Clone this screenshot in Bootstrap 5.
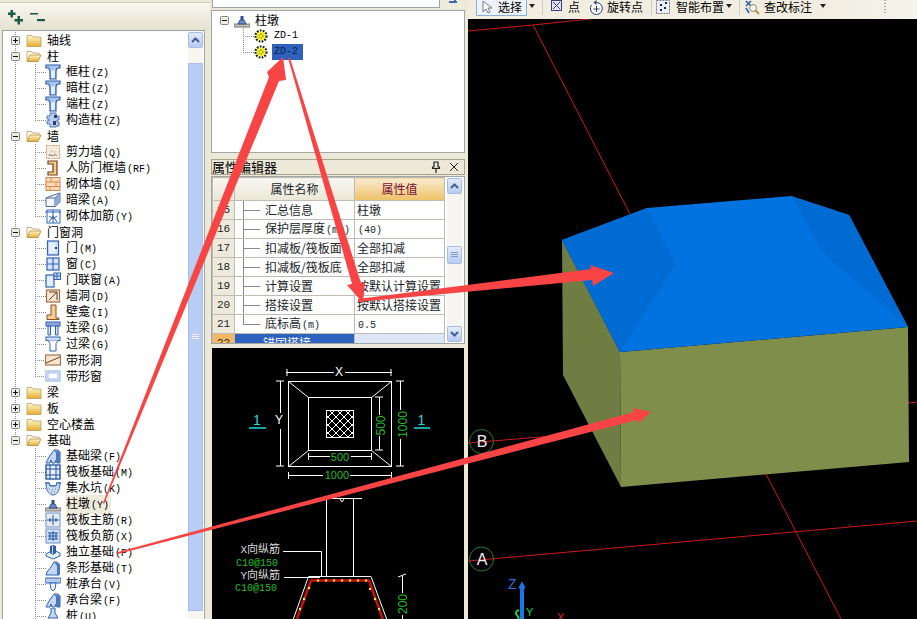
<!DOCTYPE html>
<html lang="zh"><head><meta charset="utf-8"><title>柱墩</title>
<link rel="stylesheet" href="https://cdn.jsdelivr.net/npm/bootstrap@5.3.0/dist/css/bootstrap.min.css">
<style>
body{margin:0;background:#ECE9D8;color:#000}
.appwin{width:917px;height:619px;font:12px/16px "Noto Sans CJK SC","Liberation Sans",sans-serif;background:#ECE9D8}
.svgdefs{position:absolute;width:0;height:0}
.km{font:10px/16px "Liberation Mono",monospace;margin-left:1px}
/* left */
.leftcol{width:210px;flex:none}
.topstrip{height:28px;border-top:1px solid #CFCBB5;margin-top:2px;background:linear-gradient(#F8F6EE,#E6E2D0);padding:4px 0 0 7px;flex:none}
.treebox{margin-left:2px;width:203px;height:591px;background:#fff;border:1px solid #9FA6A8;border-bottom:0;padding-top:1px;flex:none}
.treelist{flex:1 1 auto;min-width:0}
.tr{height:16px;white-space:nowrap}
.c1{flex:none;width:24px;height:16px;background:repeating-linear-gradient(#8a8a8a 0 1px,#fff 1px 2px) 12px 0/1px 100% no-repeat}
.c1.half{background-size:1px 50%}
.c1.blank{background:none}
.c2{flex:none;width:19px;height:16px;background:repeating-linear-gradient(#8a8a8a 0 1px,#fff 1px 2px) 8px 0/1px 100% no-repeat,repeating-linear-gradient(90deg,#8a8a8a 0 1px,#fff 1px 2px) 8px 8px/11px 1px no-repeat}
.c2.last{background:repeating-linear-gradient(#8a8a8a 0 1px,#fff 1px 2px) 8px 0/1px 50% no-repeat,repeating-linear-gradient(90deg,#8a8a8a 0 1px,#fff 1px 2px) 8px 8px/11px 1px no-repeat}
.exp{width:9px;height:9px;margin-left:8px;flex:none}
.ico{width:16px;height:16px;flex:none;margin-left:-1px}
.tx{margin-left:5px}
.hit{background:#EDEBDC;padding-right:2px;margin-right:-2px}
.sb{flex:none;width:15px;margin:0 1px 0 0;background:#F6F5EF}
.sbbtn{height:16px;background:linear-gradient(#E4ECFC,#B8CBF2);border:1px solid #A8BCE6;border-radius:2px;flex:none}
.sbthumb{height:548px;margin-top:15px;background:#B9CCF4;border:1px solid #A6BCEC;border-radius:1px}
/* middle */
.midcol{width:258px;flex:none}
.searchrow{height:8px;margin-left:2px;width:253px;flex:none}
.searchinp{width:228px;background:#fff;border:1px solid #9FA6A8;border-top:0}
.searchbtn{width:25px;background:#EFEBDC}
.midtree{height:143px;width:254px;margin:2px 0 0 1px;background:#fff;border:1px solid #9FA6A8;padding-top:1px;flex:none}
.gutter{width:23px}
.idl{margin-left:5px}
.sel{background:#2E62BE;color:#10213F;padding:0 2px;margin-left:3px;width:31px}
.panelhead{height:16px;width:254px;margin:6px 0 0 1px;background:#ECE9D8;border:1px solid #A6A48F;font-size:13px;line-height:13px;flex:none;padding:0 5px 1px 0}
.gridbox{height:168px;width:254px;margin:1px 0 0 1px;background:#fff;border:1px solid #9FA6A8;flex:none}
.pgrid{--bs-table-bg:transparent;width:232px;table-layout:fixed;border-color:#BDBDB5;flex:none;font-size:12px;line-height:14px}
.gc1{width:22px}.gc2{width:120px}.gc3{width:90px}
.pgrid tr{height:19px}
.pgrid td,.pgrid th{padding:0;height:19px;font-weight:400;overflow:hidden;white-space:nowrap;vertical-align:middle;line-height:14px}
.pgrid .km{line-height:14px}
.pgrid thead tr{height:23px}
.pgrid th.hd{height:23px;text-align:center;background:linear-gradient(#F8F7F0,#EAE7D6)}
.pgrid th.hv{height:23px;text-align:center;color:#7A0C3C;background:linear-gradient(#F9EBD0,#EFC266)}
.pgrid td.rn{text-align:center;background:#EDEADB;font:11px/14px "Liberation Mono",monospace}
.pgrid td.nm{padding-left:30px;background:linear-gradient(#8a8a8a,#8a8a8a) 8px 0/1px 100% no-repeat,linear-gradient(#8a8a8a,#8a8a8a) 8px 50%/17px 1px no-repeat}
.pgrid td.nm.end{background:linear-gradient(#8a8a8a,#8a8a8a) 8px 0/1px 50% no-repeat,linear-gradient(#8a8a8a,#8a8a8a) 8px 50%/17px 1px no-repeat}
.pgrid td.vl{padding-left:2px}
.pgrid td.rg{background:#F4B860;font:11px/14px "Liberation Mono",monospace;text-align:center}
.pgrid td.gb{background:#2E62BE;color:#fff;padding-left:28px}
.pgrid td.gv{background:#DCE6F6}
.pscroll{flex:none;width:15px;margin-left:2px;height:164px;margin-top:1px;background:#F6F5EF}
.pthumb{height:18px;margin-top:52px;margin-bottom:62px;background:linear-gradient(#E4ECFC,#B8CBF2);border:1px solid #A8BCE6;border-radius:2px;flex:none}
.cadbox{height:272px;width:252px;margin:4px 0 0 2px;background:#000;flex:none;display:block}
/* right */
.rightcol{flex:1 1 auto;min-width:0}
.toolbar{height:19px;flex:none;background:linear-gradient(90deg,#F1EEE1,#F1EEE1 80%,#F5F3EA);white-space:nowrap;padding-left:8px;line-height:13px;font-size:12px}
.tbtn{height:17px;margin-top:-1px}
.tbtn.on{width:51px;background:#EEF3FB;border:1px solid #8FAFD8;padding-left:4px}
.caret-d{width:0;height:0;border:3px solid transparent;border-top:4px solid #222;border-bottom:0;flex:none;margin-top:4px}
.tsep{width:1px;height:15px;background:#CFCDBE;flex:none}
.ml2x{margin-left:2px}.ml3x{margin-left:3px}.ml4x{margin-left:4px}.ml5x{margin-left:5px}.ml6x{margin-left:6px}.ml7x{margin-left:7px}.ml8x{margin-left:8px}.ml9x{margin-left:9px}
.grip{width:2px;height:14px;background:repeating-linear-gradient(#AAA 0 1px,transparent 1px 3px);margin-left:auto;margin-right:31px;flex:none}
.viewport{width:449px;height:600px;display:block;flex:none}
.overlay{position:absolute;left:0;top:0;width:917px;height:619px;pointer-events:none}
.cad text{font-family:"Liberation Sans",sans-serif;font-size:12px}
.cad text.sm{font-size:11px}
.cad text.rb{font-family:"Liberation Mono",monospace;font-size:10px}
.cad text.one{font-size:14px}
.cad .cj{font-family:"Noto Sans CJK SC",sans-serif;font-size:11px}
.cad .mo{font-family:"Liberation Mono",monospace}
</style></head>
<body class="overflow-hidden">
<svg class="svgdefs" aria-hidden="true"><defs>
<linearGradient id="gold" x1="0" y1="0" x2="0" y2="1"><stop offset="0" stop-color="#FFF8D0"/><stop offset="1" stop-color="#E6AE2E"/></linearGradient>
<pattern id="hatch" width="8" height="8" patternUnits="userSpaceOnUse"><path d="M0 0L8 8M8 0L0 8" stroke="#fff" stroke-width="1" fill="none"/></pattern>
<symbol id="xp" viewBox="0 0 9 9"><rect x=".5" y=".5" width="8" height="8" rx="1" fill="#EDEDE6" stroke="#7F8A86"/><path d="M2 4.500h5M4.500 2v5" stroke="#111"/></symbol>
<symbol id="xm" viewBox="0 0 9 9"><rect x=".5" y=".5" width="8" height="8" rx="1" fill="#EDEDE6" stroke="#7F8A86"/><path d="M2 4.500h5" stroke="#111"/></symbol>
<symbol id="f1" viewBox="0 0 16 16"><path d="M1 5V3.500h5l1 1.500h8v9.500H1z" fill="url(#gold)" stroke="#B9A060" stroke-width=".8"/></symbol>
<symbol id="f2" viewBox="0 0 16 16"><path d="M1 13V3.500h5l1 1.500h6v2" fill="#FFF8E6" stroke="#B9A060" stroke-width=".8"/><path d="M1 13.500L4 7h11l-3 6.500z" fill="url(#gold)" stroke="#B08C3C" stroke-width=".8"/></symbol>
<symbol id="col" viewBox="0 0 16 16"><path d="M1 1h14v3h-2.500L11 6.500V15H5V6.500L3.500 4H1z" fill="#A9C2EE" stroke="#2A5CB0" stroke-width="1.200"/><path d="M6.200 6h3.600v8H6.200z" fill="#EAF1FC"/></symbol>
<symbol id="gz" viewBox="0 0 16 16"><path d="M5 1h6v3h3v4h-2v2h2v4h-3v1H5v-3H2V9h2V7H2V4h3z" fill="#B8CCEE" stroke="#4D76B8"/><path d="M9 3h3v3H9zM8 9h3v4H8z" fill="#25406E"/></symbol>
<symbol id="sw" viewBox="0 0 16 16"><rect x="1.500" y="1.500" width="13" height="13" fill="#F6EADC" stroke="#D49A68" stroke-dasharray="2 1"/><path d="M4 12l1-2 1 2 1-1 2 1 1-2 2 2M6 7h1M9 8h1" stroke="#8B8B80" fill="none"/></symbol>
<symbol id="rf" viewBox="0 0 16 16"><path d="M3 1h9v14H3v-3h5V4H3z" fill="#F3CD94" stroke="#7A3D10" stroke-width="1.200"/></symbol>
<symbol id="br" viewBox="0 0 16 16"><rect x="1" y="1.500" width="14" height="13" fill="#FAD9B8" stroke="#D08A50"/><path d="M1 6h14M1 10.500h14M6 1.500V6M11 6v4.500M5 10.500v4" stroke="#D08A50" fill="none"/></symbol>
<symbol id="al" viewBox="0 0 16 16"><path d="M1 6l5-2 9-3v9l-5 4.500H1z" fill="#F4F7FC" stroke="#4A6A9C"/><path d="M1 6h9v8.500M10 6l5-5" stroke="#4A6A9C" fill="none"/><path d="M10 6l5-5v9l-5 4.500z" fill="#8EA8D2"/></symbol>
<symbol id="jj" viewBox="0 0 16 16"><rect x="2" y="2" width="13" height="13" fill="#fff" stroke="#2A63C0"/><path d="M0 4h16M8 2v13M4 8l4 3 4-3M4 14l4-6 4 6" stroke="#2A63C0" fill="none"/></symbol>
<symbol id="dr" viewBox="0 0 16 16"><rect x="2.500" y="1" width="11" height="14" fill="#CFE0F8" stroke="#2F63B4" stroke-width="1.200"/><path d="M4.500 3h6v10h-6z" fill="#E8F0FC"/><rect x="10" y="7" width="2" height="2" fill="#1E3F80"/></symbol>
<symbol id="wn" viewBox="0 0 16 16"><rect x="2" y="2" width="12" height="12" fill="#D6E4FA" stroke="#2F63B4" stroke-width="1.200"/><path d="M8 2v12M2 8h12" stroke="#2F63B4" stroke-width="1.200"/></symbol>
<symbol id="mlc" viewBox="0 0 16 16"><rect x="1" y="3" width="8" height="12" fill="#E4EEFC" stroke="#2F63B4" stroke-width="1.200"/><rect x="9" y="1" width="6.500" height="6.500" fill="#CFE0F8" stroke="#2F63B4"/><path d="M12 1v6.500M9 4h6.500" stroke="#2F63B4"/></symbol>
<symbol id="wd" viewBox="0 0 16 16"><rect x="1.500" y="2" width="13" height="12" fill="#F7E6D4" stroke="#A86A3A" stroke-width="1.200"/><path d="M4 12L12 4M4 4h8v8" stroke="#5A3A20" fill="none"/></symbol>
<symbol id="bk" viewBox="0 0 16 16"><path d="M6 1h5v13h3v1.500H2V11h4z" fill="#F3CD94" stroke="#8A5020"/></symbol>
<symbol id="lk" viewBox="0 0 16 16"><rect x="1" y="2" width="14" height="4" fill="#8EA8D8" stroke="#2F63B4"/><path d="M3 6h2.500v9H3zM10.500 6H13v9h-2.500z" fill="#D6E4FA" stroke="#2F63B4"/></symbol>
<symbol id="gl" viewBox="0 0 16 16"><rect x="1" y="1" width="14" height="3.500" fill="#CFE0F8" stroke="#2F63B4"/><path d="M3 4.500l2 3V15h6V7.500l2-3" fill="#fff" stroke="#2F63B4"/></symbol>
<symbol id="dd" viewBox="0 0 16 16"><rect x=".5" y="3" width="15" height="10" fill="#F7E6D4" stroke="#A8734A" stroke-width="1.200"/><path d="M1 11L15 5" stroke="#6A3F20"/></symbol>
<symbol id="dc" viewBox="0 0 16 16"><rect x="1" y="3" width="14" height="10" fill="#E8F0FC" stroke="#A8C0E8" stroke-width="1.400"/><rect x="3" y="5" width="10" height="6" fill="#fff" stroke="#6C90D0" stroke-width=".6"/></symbol>
<symbol id="jl" viewBox="0 0 16 16"><path d="M1 15l3-6 5-7h4l2 2v11h-3l-1-3-1 3H7l-1-3-1 3z" fill="#C4D6F4" stroke="#2F63B4"/><path d="M9 2l2 3v10h4V4z" fill="#4E78BC"/></symbol>
<symbol id="fb" viewBox="0 0 16 16"><rect x="1" y="1" width="14" height="14" fill="#E4EEFC" stroke="#1F4F9C" stroke-width="1.300"/><path d="M1 5h14M1 11h14M5 1v14M11 1v14" stroke="#1F4F9C"/></symbol>
<symbol id="js" viewBox="0 0 16 16"><path d="M0 3h4l1 3h6l1-3h4" fill="none" stroke="#3A69B6" stroke-width="1.300"/><path d="M1 3c0 9 4 12 7 12s7-3 7-12l-3 0-1 3H5L4 3z" fill="#C8D8F2" stroke="#3A69B6"/><path d="M4 9h1M7 10h1M10 9h1M6 12h1M9 12h1" stroke="#7F7F7F"/></symbol>
<symbol id="zd" viewBox="0 0 16 16"><path d="M0 12h16v3H0z" fill="#C8C4B4" stroke="#777"/><path d="M4 12l2-4h4l2 4z" fill="#6C8CC4" stroke="#2F4F8C"/><rect x="6.500" y="4" width="3" height="4" fill="#2F4F8C"/></symbol>
<symbol id="zj" viewBox="0 0 16 16"><rect x="1" y="1" width="14" height="14" fill="#E4EEFC" stroke="#6C8CC4"/><path d="M2 8h12M8 3v10M5 6v4M11 6v4" stroke="#1F4F9C" fill="none"/></symbol>
<symbol id="fj" viewBox="0 0 16 16"><rect x="1" y="1" width="14" height="14" fill="#CFE0F8" stroke="#6C8CC4"/><path d="M3 5h10M3 11h10M8 3v10M3 8h10M5 5v6M11 5v6" stroke="#1F4F9C" fill="none"/></symbol>
<symbol id="dl" viewBox="0 0 16 16"><path d="M1 10l7-4 7 3v3l-7 3-7-3z" fill="#E4EEFC" stroke="#2F63B4"/><path d="M5 2l3-1 3 1v7l-3 2-3-2z" fill="#2F5CA8"/><path d="M7 2h1v8H7z" fill="#C8D8F2"/></symbol>
<symbol id="tj" viewBox="0 0 16 16"><path d="M1 15l1-3 4-5 3-5h3l2 2v11z" fill="#C4D6F4" stroke="#2F63B4"/><path d="M9 2l3 4v9h3V4z" fill="#4E78BC"/></symbol>
<symbol id="ca" viewBox="0 0 16 16"><rect x="0" y="2" width="16" height="5" rx="1" fill="#B8CCEE" stroke="#2F63B4"/><path d="M5 7h6l-1 6-2 2-2-2z" fill="#F0F4FC" stroke="#2F63B4"/></symbol>
<symbol id="zh" viewBox="0 0 16 16"><path d="M6 0h4v5l3 5H3l3-5z" fill="#C4D6F4" stroke="#2F63B4"/></symbol>
<symbol id="gr" viewBox="0 0 16 16"><circle cx="8" cy="8" r="5.500" fill="none" stroke="#2A2A00" stroke-width="2.200" stroke-dasharray="1.800 1.200"/><circle cx="8" cy="8" r="4.200" fill="#F6EE18"/><circle cx="8" cy="8" r="2" fill="none" stroke="#444" stroke-width=".8" stroke-dasharray="1 1"/></symbol>
</defs></svg>

<div class="appwin d-flex position-relative overflow-hidden">
 <div class="leftcol d-flex flex-column">
  <div class="topstrip d-flex align-items-start">
   <svg width="20" height="20" viewBox="0 0 20 20"><path d="M3.500 3H6v2.500h2.500V8H6v2.500H3.500V8H1V5.500h2.500zM10.500 9H13v3h3v2.500h-3v3h-2.500v-3h-3V12h3z" fill="#1A5A4A"/></svg>
   <svg width="22" height="20" viewBox="0 0 22 20"><path d="M3 6h8v1.500H3z" fill="#1A4F45"/><path d="M10 12h8v2.200h-8z" fill="#1A5A4A"/></svg>
  </div>
  <div class="treebox d-flex">
   <div class="treelist">
    <div class="tr d-flex align-items-center"><div class="c1 d-flex align-items-center"><svg class="exp"><use href="#xp"/></svg></div><svg class="ico"><use href="#f1"/></svg><span class="tx">轴线</span></div>
    <div class="tr d-flex align-items-center"><div class="c1 d-flex align-items-center"><svg class="exp"><use href="#xm"/></svg></div><svg class="ico"><use href="#f2"/></svg><span class="tx">柱</span></div>
    <div class="tr d-flex align-items-center"><div class="c1"></div><div class="c2"></div><svg class="ico"><use href="#col"/></svg><span class="tx">框柱<span class="km">(Z)</span></span></div>
    <div class="tr d-flex align-items-center"><div class="c1"></div><div class="c2"></div><svg class="ico"><use href="#col"/></svg><span class="tx">暗柱<span class="km">(Z)</span></span></div>
    <div class="tr d-flex align-items-center"><div class="c1"></div><div class="c2"></div><svg class="ico"><use href="#col"/></svg><span class="tx">端柱<span class="km">(Z)</span></span></div>
    <div class="tr d-flex align-items-center"><div class="c1"></div><div class="c2 last"></div><svg class="ico"><use href="#gz"/></svg><span class="tx">构造柱<span class="km">(Z)</span></span></div>
    <div class="tr d-flex align-items-center"><div class="c1 d-flex align-items-center"><svg class="exp"><use href="#xm"/></svg></div><svg class="ico"><use href="#f2"/></svg><span class="tx">墙</span></div>
    <div class="tr d-flex align-items-center"><div class="c1"></div><div class="c2"></div><svg class="ico"><use href="#sw"/></svg><span class="tx">剪力墙<span class="km">(Q)</span></span></div>
    <div class="tr d-flex align-items-center"><div class="c1"></div><div class="c2"></div><svg class="ico"><use href="#rf"/></svg><span class="tx">人防门框墙<span class="km">(RF)</span></span></div>
    <div class="tr d-flex align-items-center"><div class="c1"></div><div class="c2"></div><svg class="ico"><use href="#br"/></svg><span class="tx">砌体墙<span class="km">(Q)</span></span></div>
    <div class="tr d-flex align-items-center"><div class="c1"></div><div class="c2"></div><svg class="ico"><use href="#al"/></svg><span class="tx">暗梁<span class="km">(A)</span></span></div>
    <div class="tr d-flex align-items-center"><div class="c1"></div><div class="c2 last"></div><svg class="ico"><use href="#jj"/></svg><span class="tx">砌体加筋<span class="km">(Y)</span></span></div>
    <div class="tr d-flex align-items-center"><div class="c1 d-flex align-items-center"><svg class="exp"><use href="#xm"/></svg></div><svg class="ico"><use href="#f2"/></svg><span class="tx">门窗洞</span></div>
    <div class="tr d-flex align-items-center"><div class="c1"></div><div class="c2"></div><svg class="ico"><use href="#dr"/></svg><span class="tx">门<span class="km">(M)</span></span></div>
    <div class="tr d-flex align-items-center"><div class="c1"></div><div class="c2"></div><svg class="ico"><use href="#wn"/></svg><span class="tx">窗<span class="km">(C)</span></span></div>
    <div class="tr d-flex align-items-center"><div class="c1"></div><div class="c2"></div><svg class="ico"><use href="#mlc"/></svg><span class="tx">门联窗<span class="km">(A)</span></span></div>
    <div class="tr d-flex align-items-center"><div class="c1"></div><div class="c2"></div><svg class="ico"><use href="#wd"/></svg><span class="tx">墙洞<span class="km">(D)</span></span></div>
    <div class="tr d-flex align-items-center"><div class="c1"></div><div class="c2"></div><svg class="ico"><use href="#bk"/></svg><span class="tx">壁龛<span class="km">(I)</span></span></div>
    <div class="tr d-flex align-items-center"><div class="c1"></div><div class="c2"></div><svg class="ico"><use href="#lk"/></svg><span class="tx">连梁<span class="km">(G)</span></span></div>
    <div class="tr d-flex align-items-center"><div class="c1"></div><div class="c2"></div><svg class="ico"><use href="#gl"/></svg><span class="tx">过梁<span class="km">(G)</span></span></div>
    <div class="tr d-flex align-items-center"><div class="c1"></div><div class="c2"></div><svg class="ico"><use href="#dd"/></svg><span class="tx">带形洞</span></div>
    <div class="tr d-flex align-items-center"><div class="c1"></div><div class="c2 last"></div><svg class="ico"><use href="#dc"/></svg><span class="tx">带形窗</span></div>
    <div class="tr d-flex align-items-center"><div class="c1 d-flex align-items-center"><svg class="exp"><use href="#xp"/></svg></div><svg class="ico"><use href="#f1"/></svg><span class="tx">梁</span></div>
    <div class="tr d-flex align-items-center"><div class="c1 d-flex align-items-center"><svg class="exp"><use href="#xp"/></svg></div><svg class="ico"><use href="#f1"/></svg><span class="tx">板</span></div>
    <div class="tr d-flex align-items-center"><div class="c1 d-flex align-items-center"><svg class="exp"><use href="#xp"/></svg></div><svg class="ico"><use href="#f1"/></svg><span class="tx">空心楼盖</span></div>
    <div class="tr d-flex align-items-center"><div class="c1 half d-flex align-items-center"><svg class="exp"><use href="#xm"/></svg></div><svg class="ico"><use href="#f2"/></svg><span class="tx">基础</span></div>
    <div class="tr d-flex align-items-center"><div class="c1 blank"></div><div class="c2"></div><svg class="ico"><use href="#jl"/></svg><span class="tx">基础梁<span class="km">(F)</span></span></div>
    <div class="tr d-flex align-items-center"><div class="c1 blank"></div><div class="c2"></div><svg class="ico"><use href="#fb"/></svg><span class="tx">筏板基础<span class="km">(M)</span></span></div>
    <div class="tr d-flex align-items-center"><div class="c1 blank"></div><div class="c2"></div><svg class="ico"><use href="#js"/></svg><span class="tx">集水坑<span class="km">(K)</span></span></div>
    <div class="tr d-flex align-items-center"><div class="c1 blank"></div><div class="c2"></div><svg class="ico"><use href="#zd"/></svg><span class="tx hit">柱墩<span class="km">(Y)</span></span></div>
    <div class="tr d-flex align-items-center"><div class="c1 blank"></div><div class="c2"></div><svg class="ico"><use href="#zj"/></svg><span class="tx">筏板主筋<span class="km">(R)</span></span></div>
    <div class="tr d-flex align-items-center"><div class="c1 blank"></div><div class="c2"></div><svg class="ico"><use href="#fj"/></svg><span class="tx">筏板负筋<span class="km">(X)</span></span></div>
    <div class="tr d-flex align-items-center"><div class="c1 blank"></div><div class="c2"></div><svg class="ico"><use href="#dl"/></svg><span class="tx">独立基础<span class="km">(P)</span></span></div>
    <div class="tr d-flex align-items-center"><div class="c1 blank"></div><div class="c2"></div><svg class="ico"><use href="#tj"/></svg><span class="tx">条形基础<span class="km">(T)</span></span></div>
    <div class="tr d-flex align-items-center"><div class="c1 blank"></div><div class="c2"></div><svg class="ico"><use href="#ca"/></svg><span class="tx">桩承台<span class="km">(V)</span></span></div>
    <div class="tr d-flex align-items-center"><div class="c1 blank"></div><div class="c2"></div><svg class="ico"><use href="#jl"/></svg><span class="tx">承台梁<span class="km">(F)</span></span></div>
    <div class="tr d-flex align-items-center"><div class="c1 blank"></div><div class="c2"></div><svg class="ico"><use href="#zh"/></svg><span class="tx">桩<span class="km">(U)</span></span></div>
   </div>
   <div class="sb d-flex flex-column">
    <div class="sbbtn d-flex align-items-center justify-content-center"><svg width="9" height="6" viewBox="0 0 9 6"><path d="M1 5l3.500-3.500L8 5" fill="none" stroke="#41618F" stroke-width="2"/></svg></div>
    <div class="sbthumb d-flex align-items-center justify-content-center"><svg width="7" height="6" viewBox="0 0 7 6"><path d="M0 .5h7M0 2.500h7M0 4.500h7" stroke="#EDF2FD"/></svg></div>
   </div>
  </div>
 </div>

 <div class="midcol d-flex flex-column">
  <div class="searchrow d-flex"><div class="searchinp"></div><div class="searchbtn d-flex justify-content-center"><svg width="14" height="8" viewBox="0 0 14 8"><path d="M3 2h8M9 0v3" stroke="#3B6BB5" stroke-width="2" fill="none"/></svg></div></div>
  <div class="midtree">
   <div class="tr d-flex align-items-center"><div class="c1 blank gutter d-flex align-items-center"><svg class="exp"><use href="#xm"/></svg></div><svg class="ico"><use href="#zd"/></svg><span class="tx">柱墩</span></div>
   <div class="tr d-flex align-items-center"><div class="c1 blank gutter"></div><div class="c2"></div><svg class="ico"><use href="#gr"/></svg><span class="km idl">ZD-1</span></div>
   <div class="tr d-flex align-items-center"><div class="c1 blank gutter"></div><div class="c2 last"></div><svg class="ico"><use href="#gr"/></svg><span class="km sel">ZD-2</span></div>
  </div>
  <div class="panelhead d-flex align-items-center"><span>属性编辑器</span>
   <svg class="ms-auto" width="10" height="12" viewBox="0 0 10 12"><path d="M3 1h4v5h1.500v1.500h-7V6H3zM5 7.500V12" fill="none" stroke="#222" stroke-width="1.200"/></svg>
   <svg class="ms-2" width="10" height="10" viewBox="0 0 10 10"><path d="M1 1l8 8M9 1l-8 8" stroke="#222"/></svg>
  </div>
  <div class="gridbox d-flex overflow-hidden">
   <table class="table table-bordered pgrid mb-0">
    <colgroup><col class="gc1"><col class="gc2"><col class="gc3"></colgroup>
    <thead><tr><th class="hd"></th><th class="hd">属性名称</th><th class="hv">属性值</th></tr></thead>
    <tbody>
     <tr><td class="rn">15</td><td class="nm">汇总信息</td><td class="vl">柱墩</td></tr>
     <tr><td class="rn">16</td><td class="nm">保护层厚度<span class="km">(mm)</span></td><td class="vl"><span class="km">(40)</span></td></tr>
     <tr><td class="rn">17</td><td class="nm">扣减板/筏板面</td><td class="vl">全部扣减</td></tr>
     <tr><td class="rn">18</td><td class="nm">扣减板/筏板底</td><td class="vl">全部扣减</td></tr>
     <tr><td class="rn">19</td><td class="nm">计算设置</td><td class="vl">按默认计算设置</td></tr>
     <tr><td class="rn">20</td><td class="nm">搭接设置</td><td class="vl">按默认搭接设置</td></tr>
     <tr><td class="rn">21</td><td class="nm end">底标高<span class="km">(m)</span></td><td class="vl"><span class="km">0.5</span></td></tr>
     <tr><td class="rg">22</td><td class="gb">锚固搭接</td><td class="gv"></td></tr>
    </tbody>
   </table>
   <div class="pscroll d-flex flex-column">
    <div class="sbbtn d-flex align-items-center justify-content-center"><svg width="9" height="6" viewBox="0 0 9 6"><path d="M1 5l3.500-3.500L8 5" fill="none" stroke="#41618F" stroke-width="2"/></svg></div>
    <div class="pthumb d-flex align-items-center justify-content-center"><svg width="7" height="6" viewBox="0 0 7 6"><path d="M0 .5h7M0 2.500h7M0 4.500h7" stroke="#7F9CCF"/></svg></div>
    <div class="sbbtn d-flex align-items-center justify-content-center"><svg width="9" height="6" viewBox="0 0 9 6"><path d="M1 1l3.500 3.500L8 1" fill="none" stroke="#41618F" stroke-width="2"/></svg></div>
   </div>
  </div>
  <svg class="cadbox cad" viewBox="212 347 252 272">
   <g stroke="#fff" fill="none">
    <rect x="288.500" y="380.500" width="103" height="85"/><rect x="308.500" y="396.500" width="63" height="53"/>
    <path d="M288.500 380.500L308.500 396.500M391.500 380.500L371.500 396.500M288.500 465.500L308.500 449.500M391.500 465.500L371.500 449.500"/>
    <rect x="326.500" y="409.500" width="27" height="27" fill="url(#hatch)"/>
    <path d="M286 371.500H334M345 371.500H392M287 368v7M391 368v7"/>
    <path d="M280.500 380V412M280.500 428V465M276 380h8M276 465h8"/>
    <path d="M400.500 380V409M400.500 438V465M396 380h8M396 465h8"/>
    <path d="M379.500 396V414M379.500 435V449M375 396h8M375 449h8"/>
    <path d="M308 455.500H330M351 455.500H372M308.500 452v7M371.500 452v7"/>
    <path d="M288 474.500H323M350 474.500H392M288.500 471v7M391.500 471v7"/>
    <path d="M316 497.500H362M326.500 497.500V575.500M353.500 497.500V575.500M340 498l2 3 2-3"/>
    <path d="M283 550.500H321.500V575.500M284 576.500H320"/>
    <path d="M308.500 575.500H371L387 619M308.500 575.500L293 619"/>
    <path d="M402.500 575V592M402.500 614V619M398 576l8-3"/>
   </g>
   <path d="M296.500 619L311 579.500H369L383 619" fill="none" stroke="#D01010" stroke-width="2.500"/>
   <g fill="#FFE840"><circle cx="318" cy="579.500" r="1.200"/><circle cx="326" cy="579.500" r="1.200"/><circle cx="334" cy="579.500" r="1.200"/><circle cx="342" cy="579.500" r="1.200"/><circle cx="350" cy="579.500" r="1.200"/><circle cx="358" cy="579.500" r="1.200"/><circle cx="366" cy="579.500" r="1.200"/><circle cx="309" cy="587" r="1.200"/><circle cx="304" cy="598" r="1.200"/><circle cx="300" cy="608" r="1.200"/><circle cx="370" cy="588" r="1.200"/><circle cx="375" cy="598" r="1.200"/><circle cx="379" cy="608" r="1.200"/></g>
   <g fill="#fff" text-anchor="middle"><text x="339" y="375">X</text><text x="279" y="423">Y</text></g>
   <g fill="#24BC24" text-anchor="middle">
    <text class="sm" x="340" y="460">500</text><text class="sm" x="337" y="478">1000</text>
    <text transform="translate(385 424.500) rotate(-90)">500</text><text transform="translate(407 423.500) rotate(-90)">1000</text>
    <text transform="translate(407 603) rotate(-90)">200</text>
   </g>
   <g fill="#22D8E0" text-anchor="middle"><text class="one" x="257" y="424">1</text><text class="one" x="421.500" y="424">1</text></g>
   <path d="M249 427h17M414 427h16" stroke="#22D8E0" stroke-width="1.500"/>
   <g text-anchor="end"><text class="cj" x="280" y="551.500" fill="#ddd"><tspan class="mo">X</tspan>向纵筋</text><text class="rb" x="278" y="565" fill="#24BC24">C10@150</text><text class="cj" x="280" y="577.500" fill="#ddd"><tspan class="mo">Y</tspan>向纵筋</text><text class="rb" x="277" y="590" fill="#24BC24">C10@150</text></g>
  </svg>
 </div>

 <div class="rightcol d-flex flex-column">
  <div class="toolbar d-flex align-items-start">
   <div class="tbtn on d-flex align-items-start"><svg width="13" height="14" viewBox="0 0 13 14"><path d="M2 1v11l3-3 2 4 2-1-2-4h4z" fill="#fff" stroke="#778"/></svg><span class="ml4x">选择</span></div>
   <div class="caret-d ml2x"></div>
   <div class="tsep ml7x"></div>
   <svg class="ml8x mt-0" width="11" height="11" viewBox="0 0 11 11"><rect x=".5" y=".5" width="10" height="10" fill="#E4E4F4" stroke="#3A3A80"/><path d="M2 2l7 7M9 2l-7 7" stroke="#3A3A80"/></svg>
   <span class="ml6x">点</span>
   <svg class="ml9x" width="15" height="15" viewBox="0 0 15 15"><path d="M2.500 5A6 6 0 1 0 7.500 2.500" fill="#fff" stroke="#2A3F70"/><path d="M7.500 0v5L4.500 2.500z" fill="#2A3F70"/><path d="M7.500 6v6M4.500 9h6" stroke="#2A3F70"/></svg>
   <span class="ml3x">旋转点</span>
   <div class="tsep ml8x"></div>
   <svg class="ml3x" width="16" height="15" viewBox="0 0 16 15"><rect x="1.500" y=".5" width="13" height="13" fill="#EAF0FA" stroke="#778" stroke-dasharray="2 1"/><path d="M5 4h2v2H5zM9 7h2v2H9zM5 9h2v2H5zM10 2h2v2h-2z" fill="#223"/></svg>
   <span class="ml5x">智能布置</span>
   <div class="caret-d ml2x"></div>
   <div class="tsep ml7x"></div>
   <svg class="ml4x" width="16" height="15" viewBox="0 0 16 15"><path d="M2 1l5 5M7 1L2 6M2 8l3 5" stroke="#2A5FB0" stroke-width="1.500" fill="none"/><circle cx="9" cy="8" r="3.500" fill="#F4F4E0" stroke="#888"/><path d="M11.500 10.500l3.500 3.500" stroke="#C09030" stroke-width="2"/></svg>
   <span class="ml4x">查改标注</span>
   <div class="caret-d ml8x"></div>
   <div class="grip"></div>
  </div>
  <svg class="viewport bg-black" viewBox="468 19 449 600">
   <g stroke="#D01818" fill="none">
    <path d="M468 31L533 25L590 19"/><path d="M533 25L630 214"/><path d="M766 474L841 619"/><path d="M908 403L917 402"/>
    <path d="M468 443L565 435"/><path d="M468 561L917 521"/>
   </g>
   <path d="M562 240L620 352L621 487L563 375z" fill="#707D42"/>
   <path d="M620 352L908 327L909 462L621 487L620 352z" fill="#7F8E4B"/>
   <path d="M562 240L647 208L791 196L849 215L908 327L620 352z" fill="#0073E0"/>
   <path d="M562 240L647 208L676 264L620 352z" fill="#006BD2"/>
   <path d="M791 196L849 215L908 327L823 253z" fill="#006BD2"/>
   <g fill="none" stroke="#2A7A2A"><circle cx="481.500" cy="441.500" r="12"/><circle cx="481.500" cy="559" r="12"/></g>
   <g fill="#EEE" font-family="Liberation Sans" font-size="16" text-anchor="middle"><text x="482" y="447">B</text><text x="482" y="565">A</text></g>
   <text x="508" y="589" fill="#2A70E0" font-family="Liberation Sans" font-size="14">Z</text>
   <path d="M522 582l3 6h-1.500v31h-3V588H519z" fill="#1878E8" stroke="#1878E8"/>
   <text x="526" y="616" fill="#1FD040" font-family="Liberation Sans" font-size="11">Y</text>
   <path d="M519 610q-5 2-2 5l2 4" stroke="#1FD040" stroke-width="2" fill="none"/>
   <text x="557" y="621" fill="#E02020" font-family="Liberation Sans" font-size="11">X</text>
  </svg>
 </div>

 <svg class="overlay" viewBox="0 0 917 619">
  <g fill="#F84444">
   <polygon points="103,503 269,77 267,72 283,57 286,80 279,81 104,504"/>
   <polygon points="288,58 290,58 361,283 365,282 363,303 347,285 352,284"/>
   <polygon points="358,299 591,269 590,265 614,273 593,286 592,280 358,302"/>
   <polygon points="118,552 634,412 633,408 651,412 639,423 637,420 118,554"/>
  </g>
 </svg>
</div>
<script src="https://cdn.jsdelivr.net/npm/bootstrap@5.3.0/dist/js/bootstrap.bundle.min.js"></script>
</body></html>
